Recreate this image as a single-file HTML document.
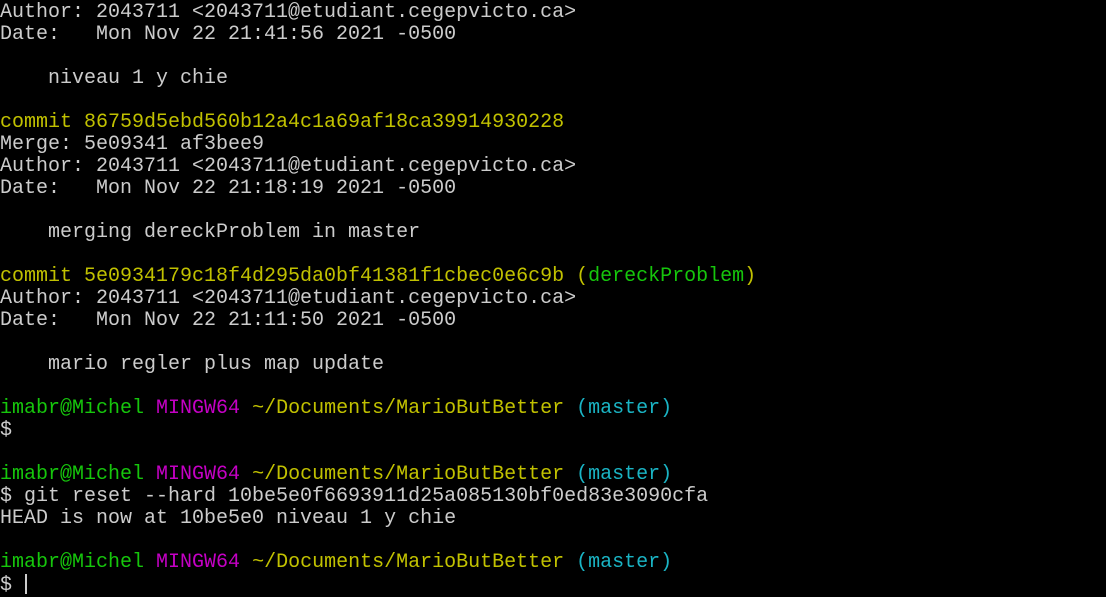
<!DOCTYPE html><html><head><style>
body{margin:0;background:#000;width:1106px;height:596px;overflow:hidden}
pre{margin:0;padding-top:2px;font-family:"Liberation Mono",monospace;font-size:20px;line-height:22px;color:#cccccc;white-space:pre}
.y{color:#c1c100}.g{color:#16c60c}.m{color:#c400c4}.c{color:#1ab4c4}
.cur{display:inline-block;width:2px;height:20px;background:#ccc;vertical-align:-4px;margin-left:1px}
</style></head><body><pre>Author: 2043711 &lt;2043711@etudiant.cegepvicto.ca&gt;
Date:   Mon Nov 22 21:41:56 2021 -0500

    niveau 1 y chie

<span class="y">commit 86759d5ebd560b12a4c1a69af18ca39914930228</span>
Merge: 5e09341 af3bee9
Author: 2043711 &lt;2043711@etudiant.cegepvicto.ca&gt;
Date:   Mon Nov 22 21:18:19 2021 -0500

    merging dereckProblem in master

<span class="y">commit 5e0934179c18f4d295da0bf41381f1cbec0e6c9b (</span><span class="g">dereckProblem</span><span class="y">)</span>
Author: 2043711 &lt;2043711@etudiant.cegepvicto.ca&gt;
Date:   Mon Nov 22 21:11:50 2021 -0500

    mario regler plus map update

<span class="g">imabr@Michel</span> <span class="m">MINGW64</span> <span class="y">~/Documents/MarioButBetter</span> <span class="c">(master)</span>
$

<span class="g">imabr@Michel</span> <span class="m">MINGW64</span> <span class="y">~/Documents/MarioButBetter</span> <span class="c">(master)</span>
$ git reset --hard 10be5e0f6693911d25a085130bf0ed83e3090cfa
HEAD is now at 10be5e0 niveau 1 y chie

<span class="g">imabr@Michel</span> <span class="m">MINGW64</span> <span class="y">~/Documents/MarioButBetter</span> <span class="c">(master)</span>
$ <span class="cur"></span></pre></body></html>
